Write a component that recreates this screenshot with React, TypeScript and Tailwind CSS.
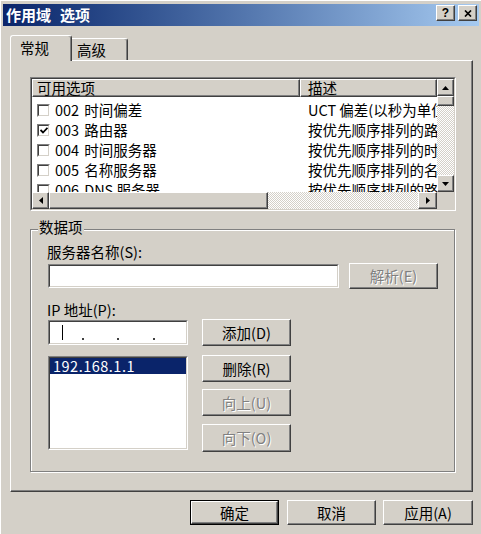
import React from 'react';

const raised =
  'border border-t-white border-l-white border-r-[#404040] border-b-[#404040] shadow-[inset_-1px_-1px_0_#808080] bg-[#d4d0c8]';
const dim = 'text-[#808080] [text-shadow:1px_1px_0_#fff]';
const dither = 'bg-[repeating-conic-gradient(#ffffff_0_25%,#d4d0c8_0_50%)] bg-[length:2px_2px]';

type Dir = 'up' | 'down' | 'left' | 'right';

const Arrow = ({ dir }: { dir: Dir }) => {
  if (dir === 'up' || dir === 'down') {
    return (
      <svg width="7" height="4" viewBox="0 0 7 4">
        <polygon points={dir === 'up' ? '0,4 7,4 3.5,0' : '0,0 7,0 3.5,4'} fill="#000" />
      </svg>
    );
  }
  return (
    <svg width="4" height="7" viewBox="0 0 4 7">
      <polygon points={dir === 'left' ? '4,0 4,7 0,3.5' : '0,0 0,7 4,3.5'} fill="#000" />
    </svg>
  );
};

const Sunken = ({ className = '', inner = '', children }: { className?: string; inner?: string; children?: React.ReactNode }) => (
  <div className={`border border-t-[#808080] border-l-[#808080] border-r-white border-b-white ${className}`}>
    <div className={`w-full h-full border border-t-[#404040] border-l-[#404040] border-r-[#d4d0c8] border-b-[#d4d0c8] ${inner}`}>
      {children}
    </div>
  </div>
);

const Btn = ({ children, disabled, className = '' }: { children: React.ReactNode; disabled?: boolean; className?: string }) => (
  <div className={`${raised} w-[89px] flex items-center justify-center ${disabled ? dim : ''} ${className}`}>{children}</div>
);

const Check = ({ checked }: { checked: boolean }) => (
  <div className="w-[13px] h-[13px] shrink-0 border border-t-[#808080] border-l-[#808080] border-r-white border-b-white">
    <div className="w-full h-full bg-white border border-t-[#404040] border-l-[#404040] border-r-[#d4d0c8] border-b-[#d4d0c8] flex items-center justify-center">
      {checked && (
        <svg width="8" height="7" viewBox="0 0 8 7">
          <path d="M0.5 3 L3 5.5 L7.5 0.8" stroke="#000" strokeWidth="1.8" fill="none" />
        </svg>
      )}
    </div>
  </div>
);

const rows = [
  { code: '002', name: '时间偏差', desc: 'UCT 偏差(以秒为单位)', checked: false },
  { code: '003', name: '路由器', desc: '按优先顺序排列的路由器', checked: true },
  { code: '004', name: '时间服务器', desc: '按优先顺序排列的时间服务器', checked: false },
  { code: '005', name: '名称服务器', desc: '按优先顺序排列的名称服务器', checked: false },
  { code: '006', name: 'DNS 服务器', desc: '按优先顺序排列的路由服务器', checked: false },
];

export default function App() {
  return (
    <div className="w-[481px] h-[534px] bg-[#d4d0c8] overflow-hidden pt-[4px] text-[14.5px] leading-[16px] text-black font-['Noto_Sans_CJK_SC',sans-serif] shadow-[inset_1px_1px_0_#fff]">
      {/* title bar */}
      <div className="ml-[3px] mr-[2px] h-[22px] flex items-center justify-between pl-[3px] pr-[2px] bg-gradient-to-r from-[#0a246a] to-[#a6caf0]">
        <div className="flex text-white font-bold text-[15px]">
          <span>作用域</span>
          <span className="ml-[9px]">选项</span>
        </div>
        <div className="flex gap-[3px] self-start mt-[1px]">
          <div className={`${raised} w-[19px] h-[16px] flex items-center justify-center font-bold text-[12px] leading-none font-['Liberation_Sans',sans-serif]`}>?</div>
          <div className={`${raised} w-[19px] h-[16px] flex items-center justify-center`}>
            <svg width="8" height="7" viewBox="0 0 8 7">
              <path d="M1 0.5 L7 6.5 M7 0.5 L1 6.5" stroke="#000" strokeWidth="1.7" />
            </svg>
          </div>
        </div>
      </div>

      {/* tabs */}
      <div className="mt-[9px] ml-[10px] h-[25px] flex items-end">
        <div className="relative z-10 w-[62px] h-[26px] -mb-[1px] bg-[#d4d0c8] rounded-t-[3px] border-l border-t border-r border-l-white border-t-white border-r-[#404040] shadow-[inset_-1px_0_0_#808080] pl-[9px] pt-[4px]">
          常规
        </div>
        <div className="w-[56px] h-[22px] rounded-tr-[3px] border-t border-r border-t-white border-r-[#404040] shadow-[inset_-1px_0_0_#808080] pl-[5px] pt-[3px]">
          高级
        </div>
      </div>

      {/* tab page */}
      <div className="ml-[10px] w-[463px] h-[432px] border border-t-white border-l-white border-r-[#404040] border-b-[#404040] shadow-[inset_-1px_-1px_0_#808080]">
        {/* list view */}
        <Sunken className="ml-[19px] mt-[16px] w-[426px] h-[134px]" inner="flex flex-col">
          <div className="flex h-[113px]">
            <div className="w-[405px] bg-white flex flex-col overflow-hidden">
              <div className="flex h-[18px] shrink-0 leading-[14px]">
                <div className={`${raised} w-[268px] pl-[4px] flex items-center`}>可用选项</div>
                <div className={`${raised} flex-1 pl-[7px] flex items-center`}>描述</div>
              </div>
              <div className="pt-[3px] flex flex-col">
                {rows.map((r) => (
                  <div key={r.code} className="h-[20px] shrink-0 flex items-center whitespace-nowrap">
                    <div className="w-[268px] pl-[5px] flex items-center">
                      <Check checked={r.checked} />
                      <span className="ml-[5px]">{r.code}</span>
                      <span className="ml-[5px]">{r.name}</span>
                    </div>
                    <div className="flex-1 pl-[8px] overflow-hidden">{r.desc}</div>
                  </div>
                ))}
              </div>
            </div>
            <div className="w-[17px] flex flex-col">
              <div className={`${raised} h-[17px] flex items-center justify-center`}>
                <Arrow dir="up" />
              </div>
              <div className={`${raised} h-[10px]`} />
              <div className={`flex-1 ${dither}`} />
              <div className={`${raised} h-[17px] flex items-center justify-center`}>
                <Arrow dir="down" />
              </div>
            </div>
          </div>
          <div className="flex h-[17px]">
            <div className={`${raised} w-[17px] flex items-center justify-center`}>
              <Arrow dir="left" />
            </div>
            <div className={`${raised} w-[219px]`} />
            <div className={`flex-1 ${dither}`} />
            <div className={`${raised} w-[19px] flex items-center justify-center`}>
              <Arrow dir="right" />
            </div>
            <div className="w-[17px] bg-[#d4d0c8]" />
          </div>
        </Sunken>

        {/* group box */}
        <div className="relative mt-[18px] ml-[19px] w-[425px] h-[243px] border border-[#808080] shadow-[inset_1px_1px_0_#fff,1px_1px_0_#fff] pl-[16px] pt-[14px]">
          <span className="absolute left-[7px] -top-[11px] px-[1px] bg-[#d4d0c8]">数据项</span>
          <div>服务器名称(S):</div>
          <div className="mt-[3px] h-[26px] flex items-center">
            <Sunken className="ml-[1px] w-[291px] h-[24px]" inner="bg-white" />
            <Btn disabled className="ml-[10px] h-[26px]">解析(E)</Btn>
          </div>
          <div className="mt-[13px]">IP 地址(P):</div>
          <div className="mt-[1px] flex">
            <div className="ml-[1px] w-[140px] flex flex-col">
              <Sunken className="mt-[1px] h-[25px]" inner="bg-white flex items-end pb-[3px] pl-[12px]">
                <div className="w-[1px] h-[15px] bg-black" />
                <div className="ml-[19px] w-[2px] h-[2px] bg-[#404040]" />
                <div className="ml-[33px] w-[2px] h-[2px] bg-[#404040]" />
                <div className="ml-[34px] w-[2px] h-[2px] bg-[#404040]" />
              </Sunken>
              <Sunken className="mt-[11px] h-[94px]" inner="bg-white">
                <div className="h-[16px] bg-[#0a246a] text-white pl-[3px] flex items-center tracking-[0.5px]">192.168.1.1</div>
              </Sunken>
            </div>
            <div className="ml-[14px] flex flex-col">
              <Btn className="h-[27px]">添加(D)</Btn>
              <Btn className="mt-[9px] h-[27px]">删除(R)</Btn>
              <Btn disabled className="mt-[7px] h-[27px]">向上(U)</Btn>
              <Btn disabled className="mt-[8px] h-[28px]">向下(O)</Btn>
            </div>
          </div>
        </div>
      </div>

      {/* dialog buttons */}
      <div className="mt-[8px] pr-[8px] flex justify-end">
        <div className="w-[89px] h-[25px] border border-black">
          <div className={`${raised} w-full h-full flex items-center justify-center`}>确定</div>
        </div>
        <Btn className="ml-[8px] h-[25px]">取消</Btn>
        <Btn className="ml-[7px] w-[90px] h-[25px]">应用(A)</Btn>
      </div>
    </div>
  );
}
